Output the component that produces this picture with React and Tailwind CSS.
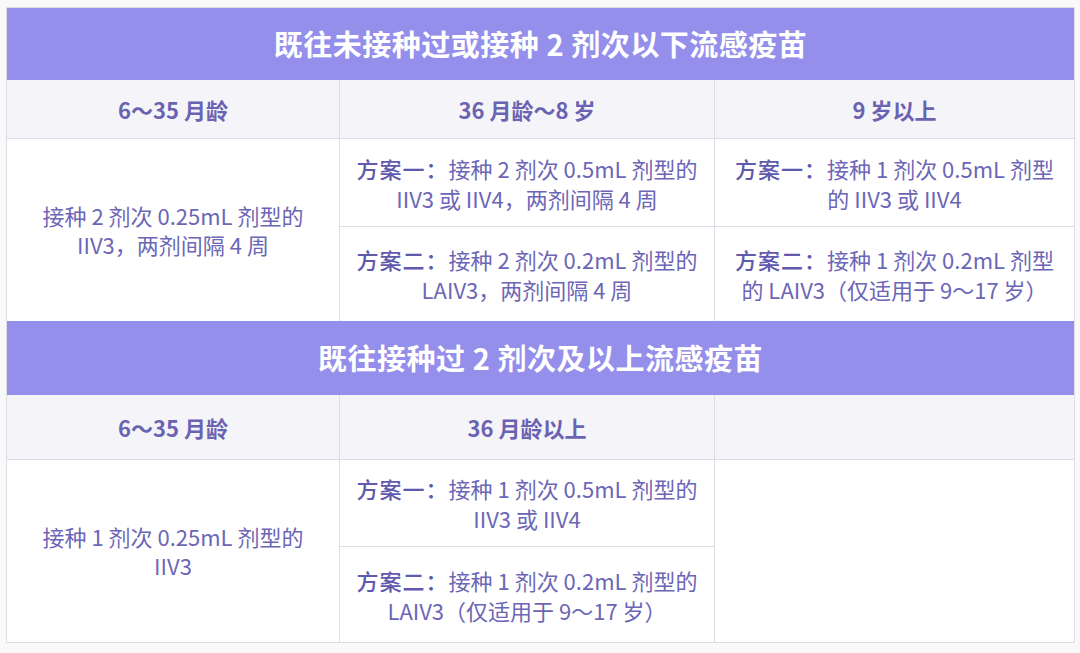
import React from 'react';

const font = { fontFamily: '"Noto Sans CJK SC", "Noto Sans", sans-serif' };

const Title = ({ children, h }) => (
  <div className={`flex items-center justify-center bg-[#958fec] text-white text-[29px] font-bold tracking-[0.5px] ${h}`}>
    {children}
  </div>
);

const AgeCell = ({ children, last }) => (
  <div className={`flex items-center justify-center bg-[#f5f4f9] text-[#6a63b2] text-[22px] font-semibold ${last ? '' : 'border-r border-[#dedde6]'}`}>
    {children}
  </div>
);

const Plan = ({ label, lines }) => (
  <p className="text-center leading-[30px]">
    <span className="font-medium text-[#6059ad] tracking-[1px]">{label}</span>
    {lines[0]}
    <br />
    {lines[1]}
  </p>
);

const App = () => {
  return (
    <div className="w-[1080px] h-[653px] bg-[#f9f9f9] pt-[7px] pl-[6px]" style={font}>
      <div className="w-[1069px] border border-[#dedde6] bg-white text-[#6c66b6] text-[22px]">
        <Title h="h-[72px]">既往未接种过或接种 2 剂次以下流感疫苗</Title>

        <div className="grid grid-cols-[333px_375px_1fr] h-[59px] border-b border-[#dedde6]">
          <AgeCell>6～35 月龄</AgeCell>
          <AgeCell>36 月龄～8 岁</AgeCell>
          <AgeCell last>9 岁以上</AgeCell>
        </div>

        <div className="grid grid-cols-[333px_375px_1fr] grid-rows-[88px_94px]">
          <div className="row-span-2 flex items-center justify-center border-r border-[#dedde6] text-center leading-[29px]">
            <p>接种 2 剂次 0.25mL 剂型的<br />IIV3，两剂间隔 4 周</p>
          </div>
          <div className="flex items-center justify-center border-r border-b border-[#dedde6]">
            <Plan label="方案一：" lines={['接种 2 剂次 0.5mL 剂型的', 'IIV3 或 IIV4，两剂间隔 4 周']} />
          </div>
          <div className="flex items-center justify-center border-b border-[#dedde6]">
            <Plan label="方案一：" lines={['接种 1 剂次 0.5mL 剂型', '的 IIV3 或 IIV4']} />
          </div>
          <div className="flex items-center justify-center border-r border-[#dedde6]">
            <Plan label="方案二：" lines={['接种 2 剂次 0.2mL 剂型的', 'LAIV3，两剂间隔 4 周']} />
          </div>
          <div className="flex items-center justify-center">
            <Plan label="方案二：" lines={['接种 1 剂次 0.2mL 剂型', '的 LAIV3（仅适用于 9～17 岁）']} />
          </div>
        </div>

        <Title h="h-[74px]">既往接种过 2 剂次及以上流感疫苗</Title>

        <div className="grid grid-cols-[333px_375px_1fr] h-[65px] border-b border-[#dedde6]">
          <AgeCell>6～35 月龄</AgeCell>
          <AgeCell>36 月龄以上</AgeCell>
          <AgeCell last></AgeCell>
        </div>

        <div className="grid grid-cols-[333px_375px_1fr] grid-rows-[87px_95px]">
          <div className="row-span-2 flex items-center justify-center border-r border-[#dedde6] text-center leading-[29px]">
            <p>接种 1 剂次 0.25mL 剂型的<br />IIV3</p>
          </div>
          <div className="flex items-center justify-center border-r border-b border-[#dedde6]">
            <Plan label="方案一：" lines={['接种 1 剂次 0.5mL 剂型的', 'IIV3 或 IIV4']} />
          </div>
          <div className="row-span-2" />
          <div className="flex items-center justify-center border-r border-[#dedde6]">
            <Plan label="方案二：" lines={['接种 1 剂次 0.2mL 剂型的', 'LAIV3（仅适用于 9～17 岁）']} />
          </div>
        </div>
      </div>
    </div>
  );
};

export default App;
